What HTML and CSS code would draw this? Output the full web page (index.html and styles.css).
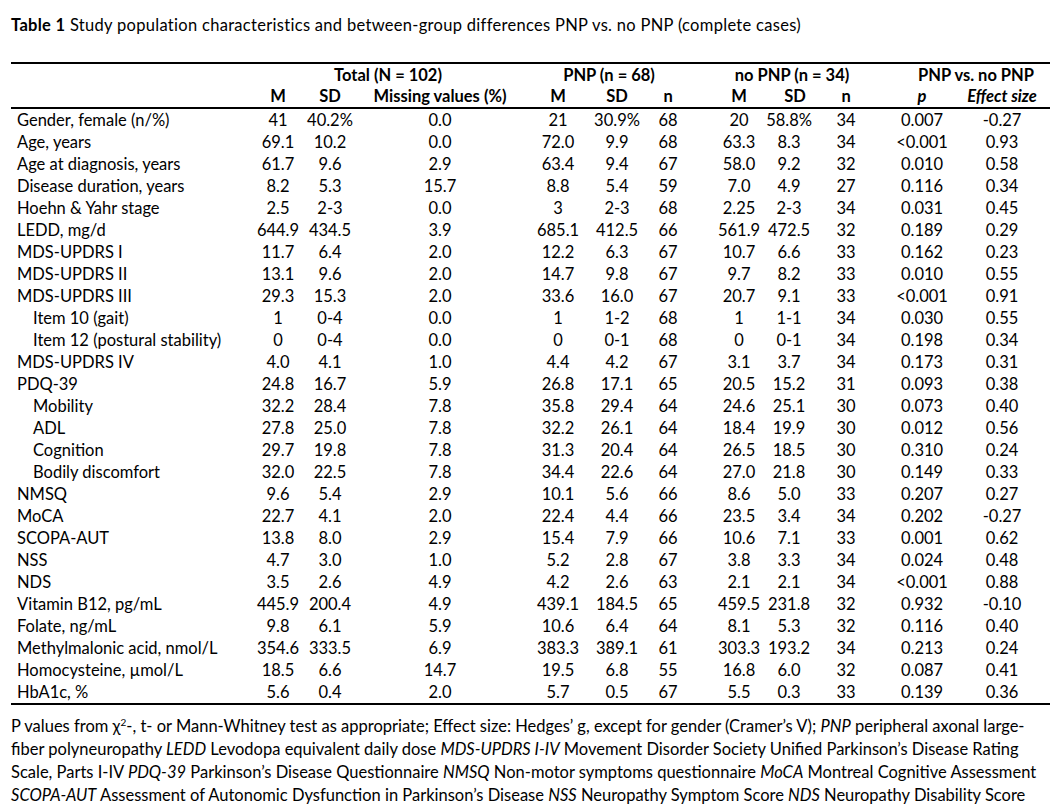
FILE: index.html
```html
<!DOCTYPE html>
<html lang="en">
<head>
<meta charset="utf-8">
<title>Table 1</title>
<link rel="stylesheet" href="styles.css">
</head>
<body>
<div class="page">
  <p class="caption"><b>Table 1</b> Study population characteristics and between-group differences PNP vs. no PNP (complete cases)</p>
  <table class="data">
    <colgroup>
      <col class="w-label"><col class="w-tm"><col class="w-tsd"><col class="w-miss">
      <col class="w-pm"><col class="w-psd"><col class="w-pn">
      <col class="w-nm"><col class="w-nsd"><col class="w-nn">
      <col class="w-p"><col class="w-es">
    </colgroup>
    <thead>
      <tr class="group">
        <th></th>
        <th colspan="3" class="g-total">Total (N = 102)</th>
        <th colspan="3" class="g-pnp">PNP (n = 68)</th>
        <th colspan="3" class="g-nopnp">no PNP (n = 34)</th>
        <th colspan="2" class="g-vs">PNP vs. no PNP</th>
      </tr>
      <tr class="sub">
        <th></th><th>M</th><th>SD</th><th>Missing values (%)</th>
        <th>M</th><th>SD</th><th>n</th>
        <th>M</th><th>SD</th><th>n</th>
        <th><i>p</i></th><th><i>Effect size</i></th>
      </tr>
    </thead>
    <tbody>
      <tr><td>Gender, female (n/%)</td><td>41</td><td>40.2%</td><td>0.0</td><td>21</td><td>30.9%</td><td>68</td><td>20</td><td>58.8%</td><td>34</td><td>0.007</td><td>-0.27</td></tr>
      <tr><td>Age, years</td><td>69.1</td><td>10.2</td><td>0.0</td><td>72.0</td><td>9.9</td><td>68</td><td>63.3</td><td>8.3</td><td>34</td><td>&lt;0.001</td><td>0.93</td></tr>
      <tr><td>Age at diagnosis, years</td><td>61.7</td><td>9.6</td><td>2.9</td><td>63.4</td><td>9.4</td><td>67</td><td>58.0</td><td>9.2</td><td>32</td><td>0.010</td><td>0.58</td></tr>
      <tr><td>Disease duration, years</td><td>8.2</td><td>5.3</td><td>15.7</td><td>8.8</td><td>5.4</td><td>59</td><td>7.0</td><td>4.9</td><td>27</td><td>0.116</td><td>0.34</td></tr>
      <tr><td>Hoehn &amp; Yahr stage</td><td>2.5</td><td>2-3</td><td>0.0</td><td>3</td><td>2-3</td><td>68</td><td>2.25</td><td>2-3</td><td>34</td><td>0.031</td><td>0.45</td></tr>
      <tr><td>LEDD, mg/d</td><td>644.9</td><td>434.5</td><td>3.9</td><td>685.1</td><td>412.5</td><td>66</td><td>561.9</td><td>472.5</td><td>32</td><td>0.189</td><td>0.29</td></tr>
      <tr><td>MDS-UPDRS I</td><td>11.7</td><td>6.4</td><td>2.0</td><td>12.2</td><td>6.3</td><td>67</td><td>10.7</td><td>6.6</td><td>33</td><td>0.162</td><td>0.23</td></tr>
      <tr><td>MDS-UPDRS II</td><td>13.1</td><td>9.6</td><td>2.0</td><td>14.7</td><td>9.8</td><td>67</td><td>9.7</td><td>8.2</td><td>33</td><td>0.010</td><td>0.55</td></tr>
      <tr><td>MDS-UPDRS III</td><td>29.3</td><td>15.3</td><td>2.0</td><td>33.6</td><td>16.0</td><td>67</td><td>20.7</td><td>9.1</td><td>33</td><td>&lt;0.001</td><td>0.91</td></tr>
      <tr><td class="sub-item">Item 10 (gait)</td><td>1</td><td>0-4</td><td>0.0</td><td>1</td><td>1-2</td><td>68</td><td>1</td><td>1-1</td><td>34</td><td>0.030</td><td>0.55</td></tr>
      <tr><td class="sub-item">Item 12 (postural stability)</td><td>0</td><td>0-4</td><td>0.0</td><td>0</td><td>0-1</td><td>68</td><td>0</td><td>0-1</td><td>34</td><td>0.198</td><td>0.34</td></tr>
      <tr><td>MDS-UPDRS IV</td><td>4.0</td><td>4.1</td><td>1.0</td><td>4.4</td><td>4.2</td><td>67</td><td>3.1</td><td>3.7</td><td>34</td><td>0.173</td><td>0.31</td></tr>
      <tr><td>PDQ-39</td><td>24.8</td><td>16.7</td><td>5.9</td><td>26.8</td><td>17.1</td><td>65</td><td>20.5</td><td>15.2</td><td>31</td><td>0.093</td><td>0.38</td></tr>
      <tr><td class="sub-item">Mobility</td><td>32.2</td><td>28.4</td><td>7.8</td><td>35.8</td><td>29.4</td><td>64</td><td>24.6</td><td>25.1</td><td>30</td><td>0.073</td><td>0.40</td></tr>
      <tr><td class="sub-item">ADL</td><td>27.8</td><td>25.0</td><td>7.8</td><td>32.2</td><td>26.1</td><td>64</td><td>18.4</td><td>19.9</td><td>30</td><td>0.012</td><td>0.56</td></tr>
      <tr><td class="sub-item">Cognition</td><td>29.7</td><td>19.8</td><td>7.8</td><td>31.3</td><td>20.4</td><td>64</td><td>26.5</td><td>18.5</td><td>30</td><td>0.310</td><td>0.24</td></tr>
      <tr><td class="sub-item">Bodily discomfort</td><td>32.0</td><td>22.5</td><td>7.8</td><td>34.4</td><td>22.6</td><td>64</td><td>27.0</td><td>21.8</td><td>30</td><td>0.149</td><td>0.33</td></tr>
      <tr><td>NMSQ</td><td>9.6</td><td>5.4</td><td>2.9</td><td>10.1</td><td>5.6</td><td>66</td><td>8.6</td><td>5.0</td><td>33</td><td>0.207</td><td>0.27</td></tr>
      <tr><td>MoCA</td><td>22.7</td><td>4.1</td><td>2.0</td><td>22.4</td><td>4.4</td><td>66</td><td>23.5</td><td>3.4</td><td>34</td><td>0.202</td><td>-0.27</td></tr>
      <tr><td>SCOPA-AUT</td><td>13.8</td><td>8.0</td><td>2.9</td><td>15.4</td><td>7.9</td><td>66</td><td>10.6</td><td>7.1</td><td>33</td><td>0.001</td><td>0.62</td></tr>
      <tr><td>NSS</td><td>4.7</td><td>3.0</td><td>1.0</td><td>5.2</td><td>2.8</td><td>67</td><td>3.8</td><td>3.3</td><td>34</td><td>0.024</td><td>0.48</td></tr>
      <tr><td>NDS</td><td>3.5</td><td>2.6</td><td>4.9</td><td>4.2</td><td>2.6</td><td>63</td><td>2.1</td><td>2.1</td><td>34</td><td>&lt;0.001</td><td>0.88</td></tr>
      <tr><td>Vitamin B12, pg/mL</td><td>445.9</td><td>200.4</td><td>4.9</td><td>439.1</td><td>184.5</td><td>65</td><td>459.5</td><td>231.8</td><td>32</td><td>0.932</td><td>-0.10</td></tr>
      <tr><td>Folate, ng/mL</td><td>9.8</td><td>6.1</td><td>5.9</td><td>10.6</td><td>6.4</td><td>64</td><td>8.1</td><td>5.3</td><td>32</td><td>0.116</td><td>0.40</td></tr>
      <tr><td>Methylmalonic acid, nmol/L</td><td>354.6</td><td>333.5</td><td>6.9</td><td>383.3</td><td>389.1</td><td>61</td><td>303.3</td><td>193.2</td><td>34</td><td>0.213</td><td>0.24</td></tr>
      <tr><td>Homocysteine, µmol/L</td><td>18.5</td><td>6.6</td><td>14.7</td><td>19.5</td><td>6.8</td><td>55</td><td>16.8</td><td>6.0</td><td>32</td><td>0.087</td><td>0.41</td></tr>
      <tr><td>HbA1c, %</td><td>5.6</td><td>0.4</td><td>2.0</td><td>5.7</td><td>0.5</td><td>67</td><td>5.5</td><td>0.3</td><td>33</td><td>0.139</td><td>0.36</td></tr>
    </tbody>
  </table>
  <p class="note">P values from χ<sup>2</sup>-, t- or Mann-Whitney test as appropriate; Effect size: Hedges’ g, except for gender (Cramer’s V); <i>PNP</i> peripheral axonal large-<br>fiber polyneuropathy <i>LEDD</i> Levodopa equivalent daily dose <i>MDS-UPDRS I-IV</i> Movement Disorder Society Unified Parkinson’s Disease Rating<br>Scale, Parts I-IV <i>PDQ-39</i> Parkinson’s Disease Questionnaire <i>NMSQ</i> Non-motor symptoms questionnaire <i>MoCA</i> Montreal Cognitive Assessment<br><i>SCOPA-AUT</i> Assessment of Autonomic Dysfunction in Parkinson’s Disease <i>NSS</i> Neuropathy Symptom Score <i>NDS</i> Neuropathy Disability Score</p>
</div>
</body>
</html>
```

FILE: styles.css
```css
html, body {
  margin: 0;
  padding: 0;
  background: #fff;
}

body {
  font-family: Lato, "Open Sans", sans-serif;
  font-size: 16.5px;
  color: #000;
}

.page {
  width: 1039px;
  padding: 15px 12px 0 11px;
}

.caption {
  margin: 0;
  line-height: 20px;
  letter-spacing: 0.3px;
  white-space: nowrap;
}

.data {
  margin-top: 27px;
  width: 1039px;
  table-layout: fixed;
  border-collapse: collapse;
  border-top: 2px solid #000;
  border-bottom: 2px solid #000;
}

.data th,
.data td {
  padding: 0;
  height: 22px;
  line-height: 22px;
  text-align: center;
  white-space: nowrap;
  font-weight: normal;
}

.data thead th {
  font-weight: bold;
}

.data thead tr.group th {
  height: 22px;
  line-height: 22px;
}

.data thead tr.sub th {
  height: 21px;
  line-height: 21px;
  border-bottom: 2px solid #000;
}

.data td:first-child {
  text-align: left;
  padding-left: 6px;
}

.data td.sub-item {
  padding-left: 22px;
}

.data tr.sub th:nth-child(8),
.data td:nth-child(8) {
  padding-left: 20px;
}

.data tr.sub th:nth-child(12),
.data td:nth-child(12) {
  padding-right: 12px;
}

.data tr.sub th:nth-child(9) {
  padding-left: 12px;
}

.data th.g-nopnp {
  padding-left: 12px;
}

.data th.g-vs {
  padding-left: 24px;
}

col.w-label { width: 241px; }
col.w-tm { width: 52px; }
col.w-tsd { width: 52px; }
col.w-miss { width: 168px; }
col.w-pm { width: 68px; }
col.w-psd { width: 50px; }
col.w-pn { width: 52px; }
col.w-nm { width: 70px; }
col.w-nsd { width: 50px; }
col.w-nn { width: 64px; }
col.w-p { width: 88px; }
col.w-es { width: 84px; }

.note {
  margin: 10px 0 0;
  padding-bottom: 0;
  line-height: 23px;
  white-space: nowrap;
  border-bottom: 2px solid #000;
}

.note sup {
  font-size: 10px;
  line-height: 0;
}
```
